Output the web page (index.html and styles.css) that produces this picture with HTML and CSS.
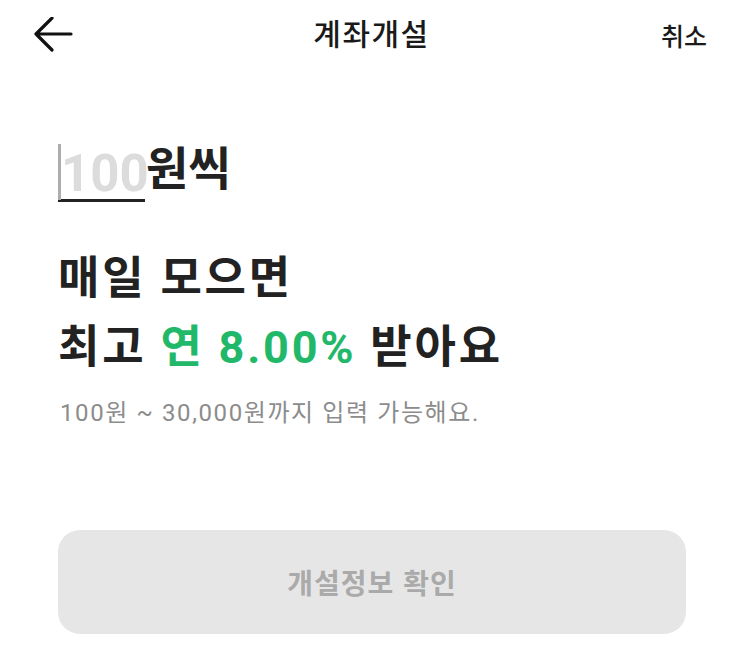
FILE: index.html
```html
<!DOCTYPE html>
<html lang="ko">
<head>
<meta charset="utf-8">
<link rel="stylesheet" href="styles.css">
</head>
<body>
<div class="screen">
  <header class="topbar">
    <button class="back" aria-label="뒤로">
      <svg width="40" height="36" viewBox="0 0 40 36"><path d="M38 17H3M19 1L3 17L19 33" fill="none" stroke="#111" stroke-width="3.2" stroke-linecap="round" stroke-linejoin="round"/></svg>
    </button>
    <h1 class="title">계좌개설</h1>
    <span class="cancel">취소</span>
  </header>

  <div class="amount">
    <span class="field"><span class="caret"></span><span class="placeholder">100</span></span><span class="unit">원씩</span>
  </div>

  <p class="headline">매일 모으면<br>최고 <span class="green">연 8.00%</span> 받아요</p>

  <p class="hint">100원 ~ 30,000원까지 입력 가능해요.</p>

  <div class="action">
    <button class="confirm">개설정보 확인</button>
  </div>
</div>
</body>
</html>
```

FILE: styles.css
```css
* { box-sizing: border-box; }
html, body { margin: 0; padding: 0; background: #fff; }
body {
  font-family: Roboto, "Noto Sans CJK KR", sans-serif;
  color: #222;
}
.screen { width: 743px; height: 661px; overflow: hidden; }

.topbar {
  height: 70px;
  display: flex;
  align-items: center;
  justify-content: space-between;
  padding: 0 36px 0 33px;
  position: relative;
}
.back {
  border: 0; background: none; padding: 0; margin: 0;
  width: 40px; height: 36px; display: flex;
}
.title {
  position: absolute; left: 0; right: 0; top: 0;
  margin: 0; text-align: center;
  font-size: 30px; font-weight: 500; line-height: 70px;
  letter-spacing: 1.5px;
  color: #1a1a1a;
  pointer-events: none;
}
.cancel { font-size: 25px; font-weight: 500; color: #1a1a1a; }

.amount {
  margin-top: 74px;
  padding-left: 58px;
  display: flex;
  align-items: flex-end;
  height: 58px;
}
.field {
  display: flex; align-items: flex-end;
  border-bottom: 3px solid #222;
  height: 58px;
  width: 87px;
}
.caret { width: 3px; height: 56px; background: #adadad; align-self: flex-start; flex: none; }
.placeholder {
  font-family: Roboto, sans-serif; font-weight: 700;
  font-size: 51px; line-height: 50px; color: #dcdcdc;
  margin-left: 0;
}
.unit {
  font-size: 46px; font-weight: 700; line-height: 58px; color: #222;
  margin-left: 1px;
  position: relative; top: -4px;
}

.headline {
  margin: 42px 0 0 0;
  padding-left: 58px;
  font-size: 45px; font-weight: 700; line-height: 69px;
  letter-spacing: 2.8px;
  color: #222;
}
.green { color: #22b86a; }

.hint {
  margin: 16px 0 0 0;
  padding-left: 60px;
  font-size: 24px; line-height: 30px; color: #8c8c8c;
  letter-spacing: 1.6px;
}

.action { padding: 0 57px 0 58px; margin-top: 102px; }
.confirm {
  width: 100%; height: 104px;
  border: 0; border-radius: 22px;
  background: #e6e6e6; color: #aaaaaa;
  font-family: "Noto Sans CJK KR", sans-serif;
  font-size: 28px; font-weight: 700;
  letter-spacing: 1px;
}
```
